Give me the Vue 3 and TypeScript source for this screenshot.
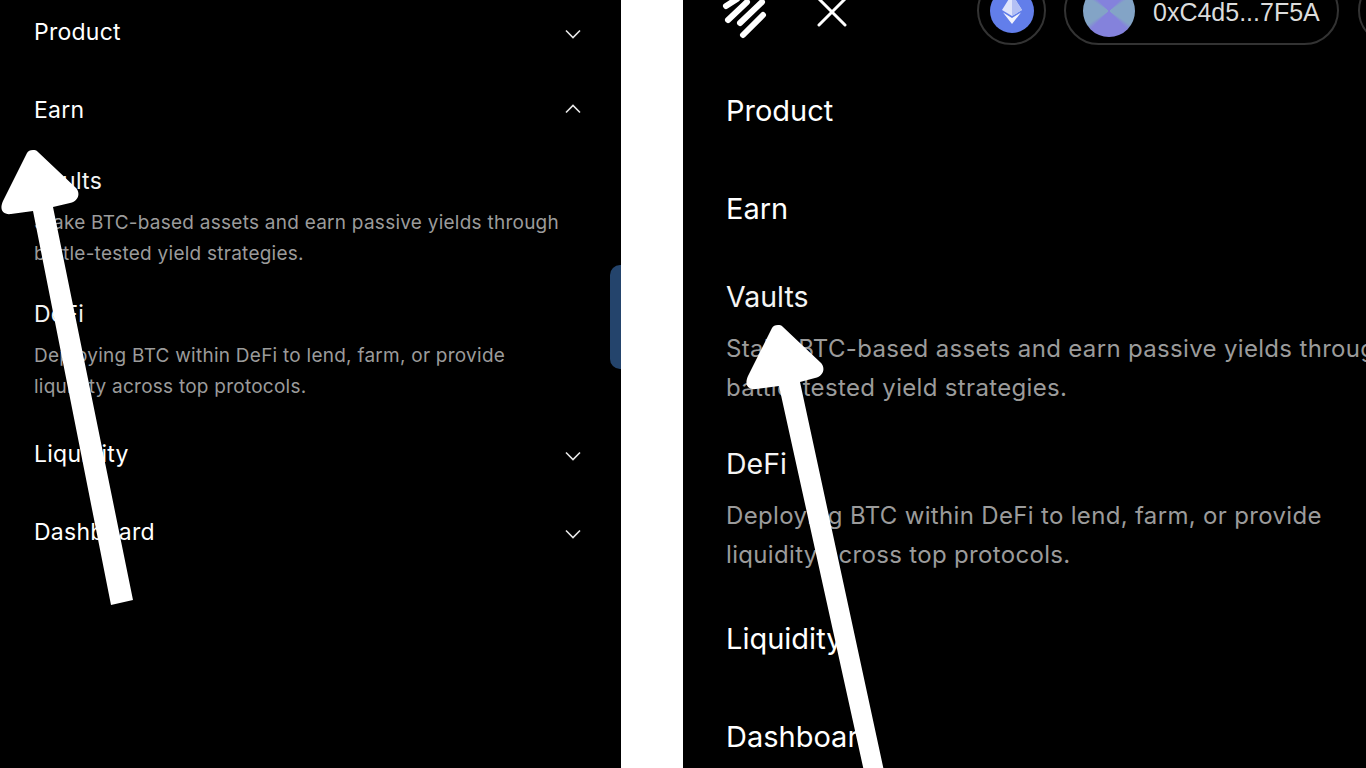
<template>
  <div class="page">
    <section class="panel left">
      <div class="nav">
        <template v-for="row in rows" :key="row.label">
          <div class="row">
            <span>{{ row.label }}</span>
            <svg class="chev" :class="row.items ? 'up' : 'down'" viewBox="0 0 16 10" fill="none" stroke="currentColor" stroke-width="1.6">
              <path :d="row.items ? 'M1 8.5 8 1.5 15 8.5' : 'M1 1.5 8 8.5 15 1.5'" />
            </svg>
          </div>
          <div v-if="row.items" class="subs">
            <div v-for="it in row.items" :key="it.title" class="sub">
              <div class="sub-title">{{ it.title }}</div>
              <p class="sub-desc">{{ it.desc }}</p>
            </div>
          </div>
        </template>
      </div>
      <div class="side-tab"></div>
      <svg class="arrow" viewBox="0 0 140 470" width="140" height="470">
        <path d="M33 150 C30 150 28 151 27 153 L3 201 C-1 210 3 215 11 214 L33 211 L111 605 L133 600 L53 207 L70 203 C79 201 81 192 75 187 L38 152 C36 150 35 150 33 150 Z" transform="translate(0 -150)" fill="#fff" />
      </svg>
    </section>

    <section class="panel right">
      <header class="top">
        <svg class="logo" viewBox="0 0 44 40" fill="none" stroke="#fff" stroke-width="6" stroke-linecap="round">
          <path d="M3 6 14 -1" />
          <path d="M5 20 24 2" />
          <path d="M17 23 39 2" />
          <path d="M20 35 40 15" />
        </svg>
        <svg class="close" viewBox="0 0 30 30" fill="none" stroke="#fff" stroke-width="3" stroke-linecap="round">
          <path d="M2 1 28 27" />
          <path d="M28 1 2 27" />
        </svg>
        <div class="chip">
          <svg class="eth" viewBox="0 0 44 44">
            <circle cx="22" cy="22" r="22" fill="#627eea" />
            <path d="M22 5 12 21 22 27 32 21Z" fill="#dfe4fb" />
            <path d="M22 5V27L32 21Z" fill="#b4c0f4" />
            <path d="M13 23.5 22 35 31 23.5 22 29Z" fill="#f1f3fd" />
          </svg>
        </div>
        <div class="wallet">
          <span class="avatar"></span>
          <span class="addr">0xC4d5...7F5A</span>
        </div>
        <div class="chip next"></div>
      </header>
      <div class="nav">
        <template v-for="row in rows" :key="row.label">
          <div class="row">{{ row.label }}</div>
          <div v-if="row.items" class="subs">
            <div v-for="it in row.items" :key="it.title" class="sub">
              <div class="sub-title">{{ it.title }}</div>
              <p class="sub-desc">{{ it.desc }}</p>
            </div>
          </div>
        </template>
      </div>
      <svg class="arrow" viewBox="0 0 160 470" width="160" height="470">
        <path d="M33 150 C30 150 28 151 27 153 L3 201 C-1 210 3 215 11 214 L34 211 L122 610 L142 610 L55 207 L70 203 C79 201 81 192 75 187 L38 152 C36 150 35 150 33 150 Z" transform="translate(0 -150)" fill="#fff" />
      </svg>
    </section>
  </div>
</template>

<script setup lang="ts">
type Sub = { title: string; desc: string };
type Row = { label: string; items?: Sub[] };

const rows: Row[] = [
  { label: 'Product' },
  {
    label: 'Earn',
    items: [
      { title: 'Vaults', desc: 'Stake BTC-based assets and earn passive yields through battle-tested yield strategies.' },
      { title: 'DeFi', desc: 'Deploying BTC within DeFi to lend, farm, or provide liquidity across top protocols.' },
    ],
  },
  { label: 'Liquidity' },
  { label: 'Dashboard' },
];
</script>

<style scoped>
.page { display:flex; justify-content:space-between; height:768px; overflow:hidden; background:#fff; font-family:Inter,"Open Sans",sans-serif; }
.panel { position:relative; height:768px; overflow:hidden; background:#000; color:#fff; flex:none; }
.left { width:621px; }
.right { width:683px; }

.row { display:flex; align-items:center; justify-content:space-between; }
.chev { display:block; width:16px; height:10px; color:#e8e8e8; }
.chev.down { margin-top:3px; }
.chev.up { margin-bottom:3px; }
.sub-title { color:#f4f4f4; }
.sub-desc { margin:0; color:#9b9b9b; }

.left .nav { margin-top:-7px; padding:0 40px 0 34px; }
.left .row { height:78px; font-size:23px; letter-spacing:.25px; }
.left .sub { padding-top:20px; margin-bottom:13.5px; }
.left .sub-title { font-size:23px; line-height:24px; letter-spacing:.25px; }
.left .sub-desc { margin-top:13.5px; width:540px; font-size:19px; line-height:31px; letter-spacing:.25px; }

.right .nav { margin-top:16px; padding-left:43px; width:640px; }
.right .row { height:98px; font-size:29px; letter-spacing:0; }
.right .sub { padding-top:25px; margin-bottom:17px; }
.right .sub:last-child { margin-bottom:15px; }
.right .sub-title { font-size:28.5px; line-height:30px; }
.right .sub-desc { margin-top:17px; width:670px; font-size:24px; line-height:39px; letter-spacing:.33px; }

.top { display:flex; align-items:center; height:69px; margin-top:-24px; padding-left:40px; }
.logo { display:block; width:44px; height:40px; margin-top:19px; flex:none; overflow:visible; }
.close { display:block; width:30px; height:30px; margin:4px 0 0 50px; flex:none; overflow:visible; }
.chip { display:flex; align-items:center; justify-content:center; width:69px; height:69px; margin-left:130px; border:2px solid #333; border-radius:50%; box-sizing:border-box; flex:none; }
.eth { display:block; width:44px; height:44px; }
.wallet { display:flex; align-items:center; gap:18px; width:275px; height:69px; margin-left:18px; padding-left:17px; border:2px solid #333; border-radius:35px; box-sizing:border-box; flex:none; }
.avatar { width:52px; height:52px; border-radius:50%; flex:none; background:conic-gradient(#8482dc 0 45deg, #83a4c6 58deg 122deg, #8482dc 135deg 225deg, #83a4c6 238deg 302deg, #8482dc 315deg); }
.addr { padding-top:3px; font-family:"Liberation Sans",Arial,sans-serif; font-size:25px; color:#dcdcdc; }
.next { margin-left:19px; }

.side-tab { position:absolute; left:610px; top:265px; width:11px; height:104px; background:#24446c; border-radius:10px 0 0 10px; }
.arrow { position:absolute; display:block; }
.left .arrow { left:0; top:150px; }
.right .arrow { left:62px; top:325px; }
</style>

<style>
body { background:#fff; }
</style>
